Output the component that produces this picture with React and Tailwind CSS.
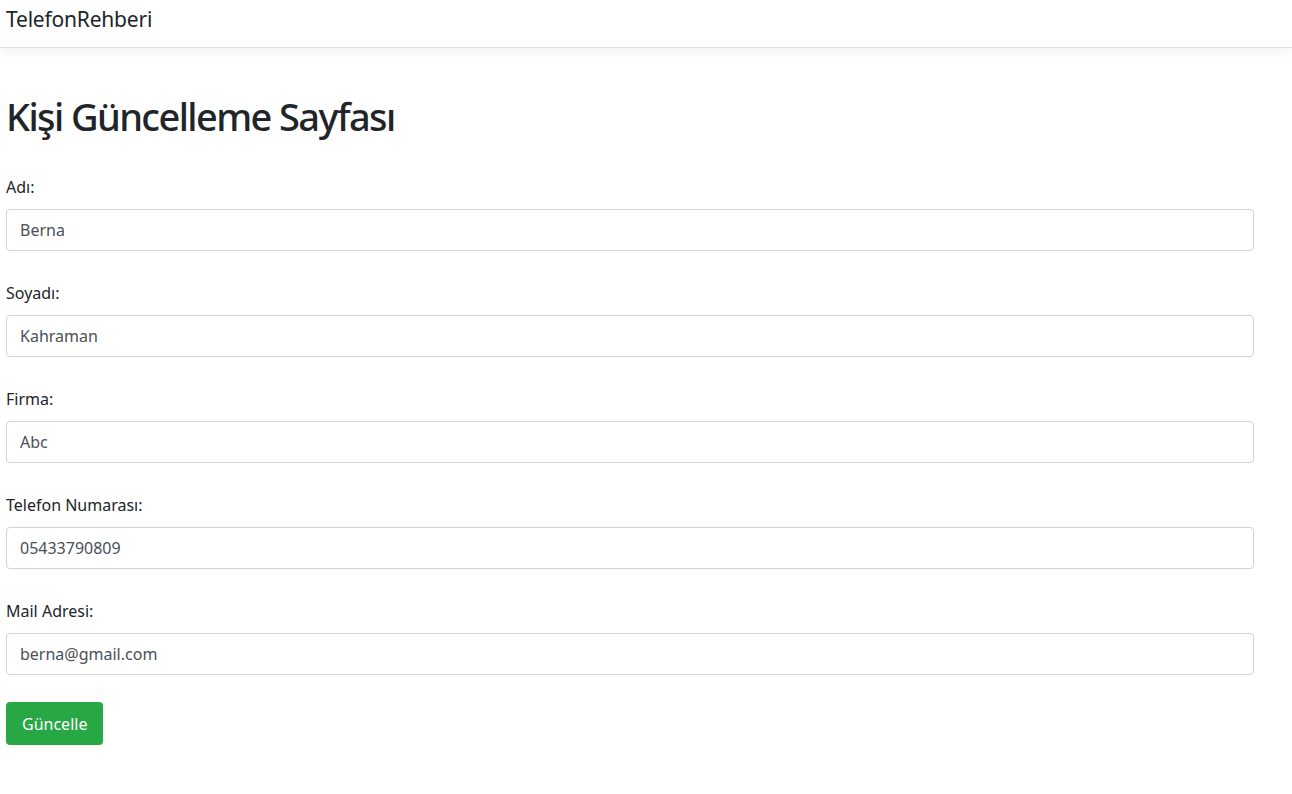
export default function App() {
  const fields = [
    ["Adı:", "Berna"],
    ["Soyadı:", "Kahraman"],
    ["Firma:", "Abc"],
    ["Telefon Numarası:", "05433790809"],
    ["Mail Adresi:", "berna@gmail.com"],
  ];
  return (
    <div className="min-h-screen bg-white text-[#212529]" style={{ fontFamily: '"Noto Sans", "Open Sans", sans-serif' }}>
      <nav className="h-[48px] border-b border-[#dee2e6] shadow-[0_4px_10px_rgba(0,0,0,0.05)] flex items-start pt-[6px] px-[6px]">
        <span className="text-[21px] leading-[26px] tracking-[-0.2px] text-[#212529]">TelefonRehberi</span>
      </nav>
      <main className="px-[6px] w-[1260px]">
        <h1 className="text-[38px] leading-[48px] font-medium tracking-[-1.6px] mt-[44px] mb-[37px]">Kişi Güncelleme Sayfası</h1>
        <form onSubmit={(e) => e.preventDefault()}>
          {fields.map(([label, value]) => (
            <div key={label} className="mb-[32px]">
              <label className="block text-[16px] leading-[20px] mb-[12px]">{label}</label>
              <input
                defaultValue={value}
                className="w-full h-[42px] px-[13px] text-[16px] text-[#495057] border border-[#ced4da] rounded-[4px] outline-none"
              />
            </div>
          ))}
          <button className="-mt-[5px] h-[43px] px-[16px] rounded-[4px] bg-[#28a745] text-white text-[16px]">Güncelle</button>
        </form>
      </main>
    </div>
  );
}
